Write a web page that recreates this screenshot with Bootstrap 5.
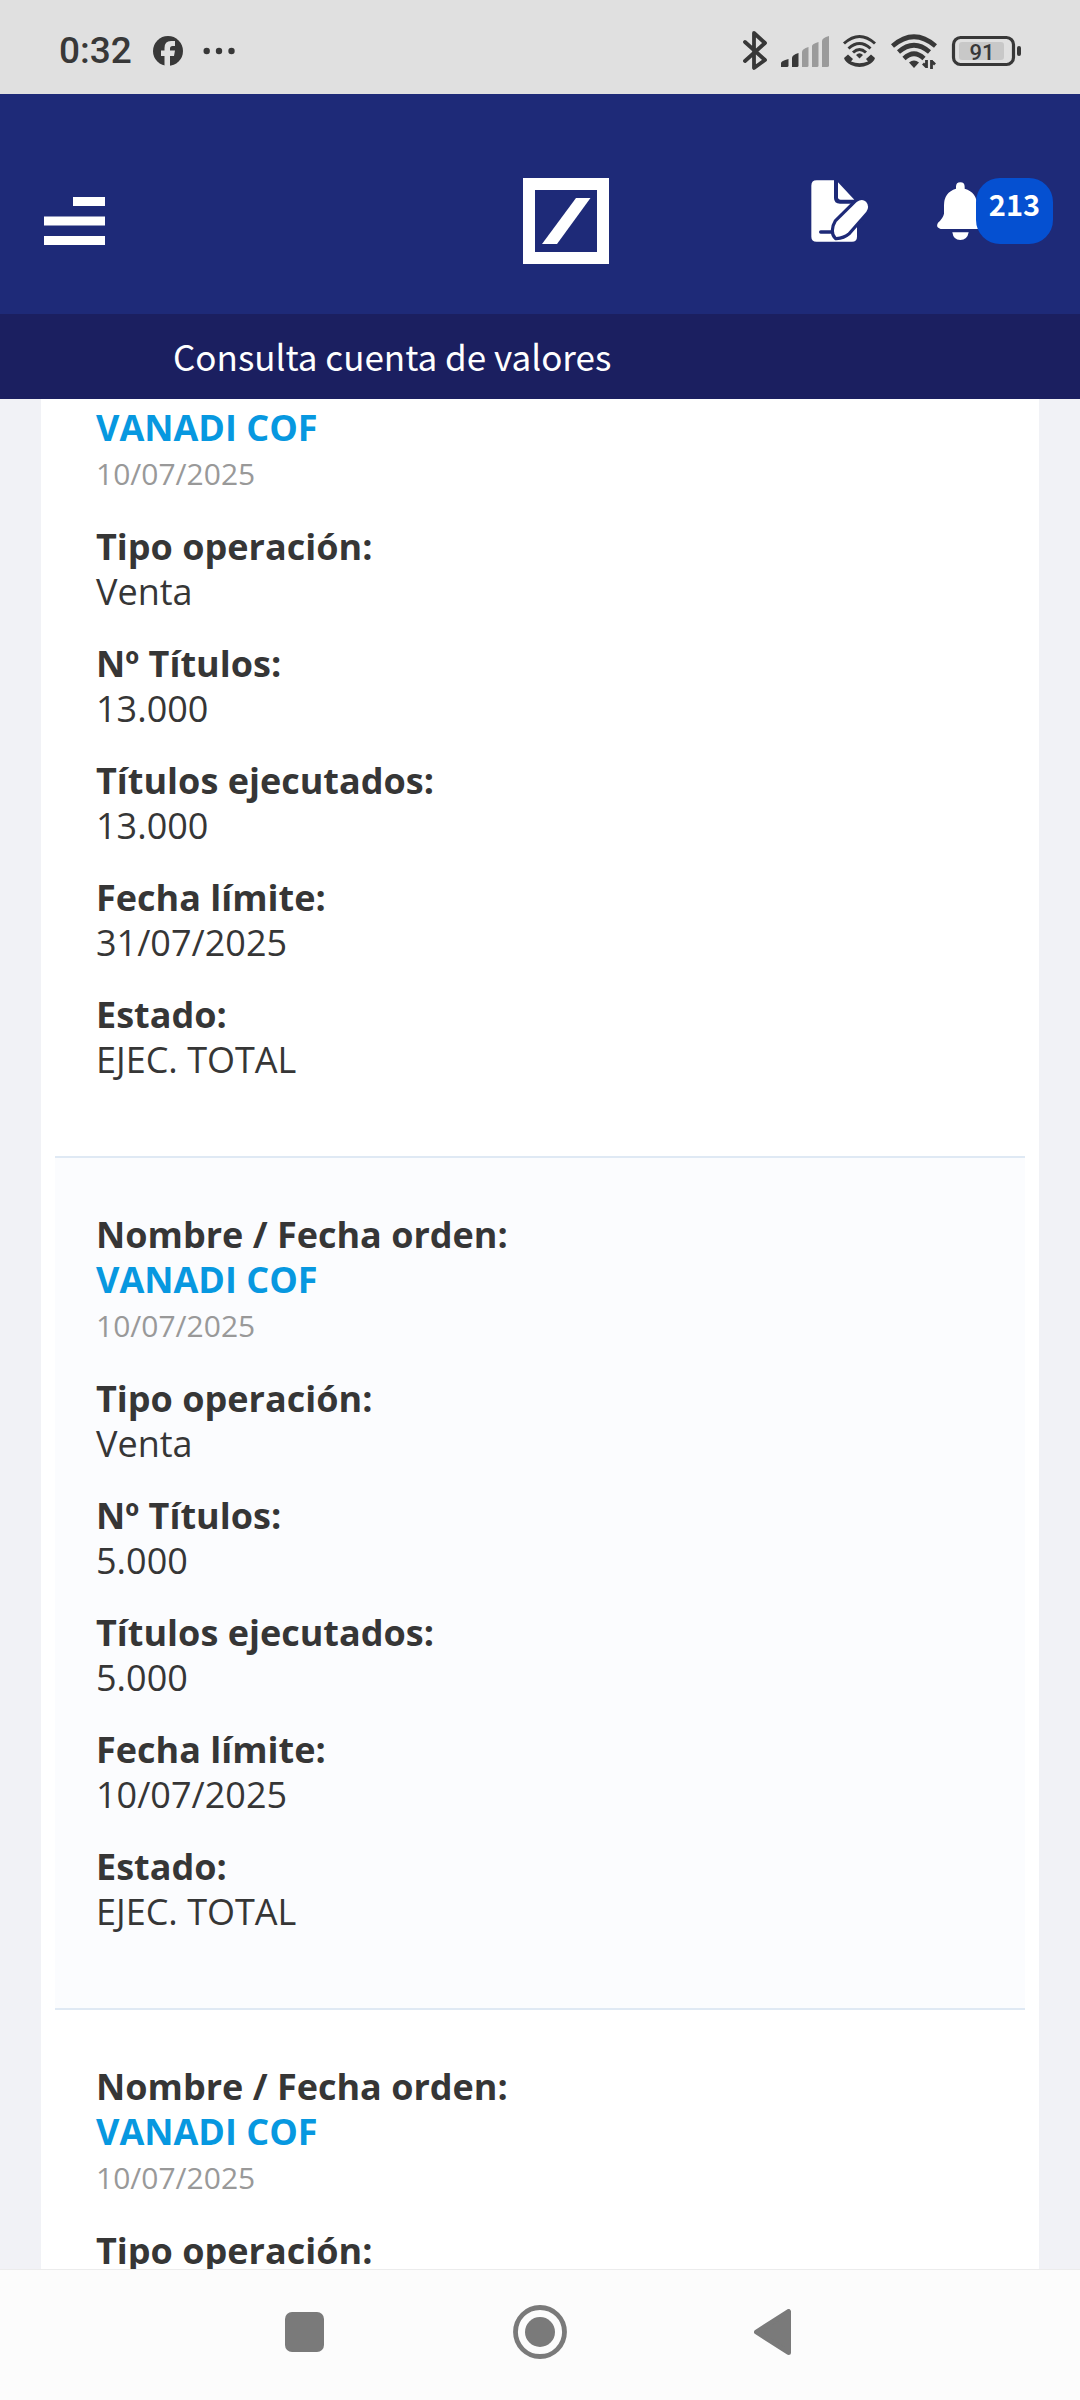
<!DOCTYPE html>
<html lang="es">
<head>
<meta charset="utf-8">
<meta name="viewport" content="width=device-width, initial-scale=1">
<title>Consulta cuenta de valores</title>
<link rel="stylesheet" href="https://cdn.jsdelivr.net/npm/bootstrap@5.3.0/dist/css/bootstrap.min.css">
<style>
body{font-family:"Open Sans","Noto Sans",sans-serif;font-size:36px;line-height:45px;color:#363636;background:#f1f2f6}
svg{display:block;flex:none}
.app-shell{height:100vh}
.phone-status{background:#e0e0e0;height:94px;padding:8px 59px 0 59px;color:#383838;font-family:Roboto,sans-serif}
.clock{font-size:37px;font-weight:500;line-height:44px}
.brand-bar{background:#1e2a78;padding:84px 27px 50px 44px}
.brand-bar button,.brand-bar a,.phone-nav button{background:none;border:0;padding:0;display:block}
.quick-links{margin-left:202px}
.alerts-btn{margin-left:68px}
.alert-count{background:#0550d1;color:#fff;width:77px;height:66px;border-radius:24px;margin-left:-8px;padding-bottom:16px;font:700 29px/45px "Noto Sans CJK JP","Noto Sans",sans-serif}
.page-title{background:#1b1f60;color:#fff;height:85px;padding:0 173px;font:400 35px/84px "Noto Sans CJK JP","Noto Sans",sans-serif}
.sheet{margin:0 41px;padding:0 14px}
.order{padding:54px 41px 47px;border-top:2px solid #dfe9f4}
.order:first-child{padding-top:6px;border-top:0}
.order:nth-child(even){background:#fbfcfe}
.order dl{margin:0 0 27px}
.order dt,.order dd{margin:0}
.order dt,.order a{font-weight:700}
.order a{color:#0798e0;text-decoration:none}
.order-date{color:#999;font-size:30px;line-height:47px}
.phone-nav{background:#fcfcfc;border-top:1px solid #ececec;height:131px;padding:0 289px 6px 285px}
</style>
<script src="https://cdn.jsdelivr.net/npm/bootstrap@5.3.0/dist/js/bootstrap.bundle.min.js"></script>
</head>
<body>
<div class="app-shell d-flex flex-column overflow-hidden">
  <div class="phone-status d-flex align-items-center gap-3 flex-shrink-0">
    <span class="clock">0:32</span>
    <svg width="88" height="40" viewBox="148 31 88 40" aria-hidden="true">
      <circle cx="168" cy="51" r="15" fill="#383838"/>
      <path d="M164.500 67V56H161V50.500H164.500V48Q164.500 41 171 41H175V46H172.500Q170 46 170 48.500V50.500H175L174 56H170V67Z" fill="#e0e0e0"/>
      <g fill="#383838"><circle cx="206.700" cy="51" r="3.200"/><circle cx="219" cy="51" r="3.200"/><circle cx="231.500" cy="51" r="3.200"/></g>
    </svg>
    <svg class="ms-auto" width="278" height="42" viewBox="743 30 278 42" role="img" aria-label="Bluetooth, señal, wifi, batería 91">
      <path d="M745 42L765 60L754 68V33L765 43L745 61" fill="none" stroke="#383838" stroke-width="3.800" stroke-linejoin="round" stroke-linecap="round"/>
      <g fill="#383838"><path d="M781 67V63Q781 61 788.500 59V65.500Q788.500 67 787 67Z"/><path d="M792 67V58Q792 55 798.500 53V65.500Q798.500 67 797 67Z"/></g>
      <g fill="#9b9b9b"><path d="M802 67V52Q802 49 808.500 47V65.500Q808.500 67 807 67Z"/><path d="M812 67V46Q812 44 818.500 42V65.500Q818.500 67 817 67Z"/><path d="M822 67V41Q822 38 829 36V65.500Q829 67 827 67Z"/></g>
      <g fill="none" stroke="#383838" stroke-width="3"><path d="M844 43.500Q859.500 29.500 875 43.500"/><path d="M848.500 48.500Q859.500 38.500 870.500 48.500"/><path d="M853 52.500Q859.500 46.500 866 52.500"/></g>
      <path d="M856 55Q859.500 51.500 863 55L859.500 58.500Z" fill="#383838"/>
      <path d="M844 58L848 54.500L853 59L851 61.500Q859.500 65 868 61.500L866 59L871 54.500L875 58Q874 62 868 65Q859.500 69 851 65Q845 62 844 58Z" fill="#383838"/>
      <g fill="none" stroke="#383838" stroke-width="4.600"><path d="M892.500 46Q914 27.500 935.500 46"/><path d="M898.500 52Q914 38.500 929.500 52"/><path d="M904 58.500Q914 49 924 58.500"/></g>
      <path d="M909 62.500Q914 58.500 919 62.500L914 68Z" fill="#383838"/>
      <path d="M926.500 60V68M931.500 69V60M926.500 67L923 63.500M931.500 61L935 64.500" stroke="#383838" stroke-width="2.800" fill="none"/>
      <rect x="953.500" y="37.500" width="60" height="27" rx="7" fill="none" stroke="#383838" stroke-width="3.200"/>
      <rect x="959" y="42" width="45" height="18" rx="3" fill="#c8c8c8"/>
      <rect x="1017" y="46" width="4" height="10" rx="2" fill="#383838"/>
      <text x="982" y="59.500" text-anchor="middle" font-family="Roboto, sans-serif" font-size="22" font-weight="500" fill="#383838">91</text>
    </svg>
  </div>

  <header class="brand-bar d-flex align-items-center flex-shrink-0">
    <button type="button" aria-label="Menú">
      <svg width="61" height="48" viewBox="0 0 61 48" fill="#fff"><path d="M29 0H61V9H29ZM0 19.500H61V28.500H0ZM0 39H61V48H0Z"/></svg>
    </button>
    <a class="ms-auto" href="#" aria-label="Inicio">
      <svg width="86" height="86" viewBox="0 0 86 86" fill="#fff"><path fill-rule="evenodd" d="M0 0H86V86H0ZM12 12V74H74V12Z"/><path d="M53 20H67.500L34 66H19Z"/></svg>
    </a>
    <div class="quick-links d-flex align-items-center align-self-start">
      <button type="button" aria-label="Firmar documento">
        <svg width="58" height="62" viewBox="93 86 174 186" fill="#fff">
          <path d="M110 87H162V140Q162 157 180 157H231V256Q231 271 216 271H110Q94 271 94 256V103Q94 87 110 87Z"/>
          <path d="M174 93L223 145H182Q174 145 174 138Z"/>
          <path d="M122 242H158" stroke="#1e2a78" stroke-width="10" stroke-linecap="round"/>
          <path d="M230 152Q246 141 258 151Q270 165 259 181L205 243Q190 256 169 257Q161 250 162 236Q163 222 170 211Z" stroke="#1e2a78" stroke-width="19" paint-order="stroke"/>
        </svg>
      </button>
      <button type="button" class="alerts-btn d-flex align-items-center" aria-label="Avisos: 213">
        <svg width="47" height="59" viewBox="471 95 141 177" fill="#fff">
          <path d="M528 115V109Q528 96 541 96Q554 96 554 109V115Q591 126 591 165V190Q594 205 608 217Q618 236 600 236H482Q466 232 474 217Q489 204 492 190V165Q492 126 528 115Z"/>
          <path d="M517 246H566Q562 269 541 269Q520 269 517 246Z"/>
        </svg>
        <span class="alert-count position-relative d-flex align-items-center justify-content-center">213</span>
      </button>
    </div>
  </header>
  <h1 class="page-title m-0 flex-shrink-0">Consulta cuenta de valores</h1>

  <main class="flex-grow-1 overflow-hidden">
    <div class="sheet bg-white">
      <article class="order">
        <dl><dd><a href="#">VANADI COF</a></dd><dd class="order-date">10/07/2025</dd></dl>
        <dl><dt>Tipo operación:</dt><dd>Venta</dd></dl>
        <dl><dt>Nº Títulos:</dt><dd>13.000</dd></dl>
        <dl><dt>Títulos ejecutados:</dt><dd>13.000</dd></dl>
        <dl><dt>Fecha límite:</dt><dd>31/07/2025</dd></dl>
        <dl><dt>Estado:</dt><dd>EJEC. TOTAL</dd></dl>
      </article>
      <article class="order">
        <dl><dt>Nombre / Fecha orden:</dt><dd><a href="#">VANADI COF</a></dd><dd class="order-date">10/07/2025</dd></dl>
        <dl><dt>Tipo operación:</dt><dd>Venta</dd></dl>
        <dl><dt>Nº Títulos:</dt><dd>5.000</dd></dl>
        <dl><dt>Títulos ejecutados:</dt><dd>5.000</dd></dl>
        <dl><dt>Fecha límite:</dt><dd>10/07/2025</dd></dl>
        <dl><dt>Estado:</dt><dd>EJEC. TOTAL</dd></dl>
      </article>
      <article class="order">
        <dl><dt>Nombre / Fecha orden:</dt><dd><a href="#">VANADI COF</a></dd><dd class="order-date">10/07/2025</dd></dl>
        <dl><dt>Tipo operación:</dt></dl>
      </article>
    </div>
  </main>

  <nav class="phone-nav d-flex align-items-center justify-content-between flex-shrink-0" aria-label="Sistema">
    <button type="button" aria-label="Recientes"><svg width="40" height="40" viewBox="0 0 40 40"><rect width="39" height="40" rx="7" fill="#7a7a7a"/></svg></button>
    <button type="button" aria-label="Inicio"><svg width="54" height="54" viewBox="0 0 54 54"><circle cx="27" cy="27" r="24.500" fill="none" stroke="#7a7a7a" stroke-width="4.800"/><circle cx="27" cy="27" r="15" fill="#7a7a7a"/></svg></button>
    <button type="button" aria-label="Atrás"><svg width="37" height="46" viewBox="0 0 37 46"><path d="M2.500 23L34.500 2.500V43.500Z" fill="#7a7a7a" stroke="#7a7a7a" stroke-width="5" stroke-linejoin="round"/></svg></button>
  </nav>
</div>
</body>
</html>
